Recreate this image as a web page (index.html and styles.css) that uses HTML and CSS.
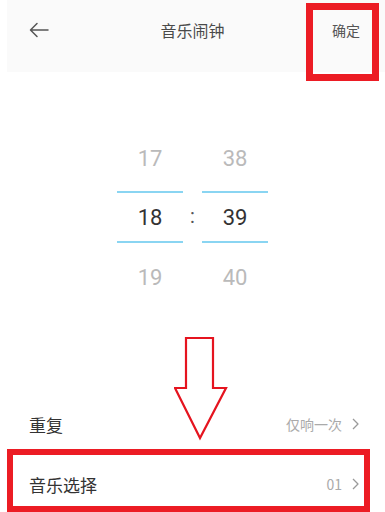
FILE: index.html
```html
<!DOCTYPE html>
<html lang="zh">
<head>
<meta charset="utf-8">
<link rel="stylesheet" href="styles.css">
</head>
<body>
<div class="page">
  <header class="header">
    <svg class="back" width="20" height="16" viewBox="0 0 20 16">
      <path d="M19 8 H2 M8 1.5 L1.5 8 L8 14.5" fill="none" stroke="#555" stroke-width="1.5" stroke-linecap="round" stroke-linejoin="round"/>
    </svg>
    <div class="title">音乐闹钟</div>
    <div class="confirm">确定</div>
  </header>

  <section class="picker">
    <div class="col">
      <div class="cell dim top">17</div>
      <div class="cell sel">18</div>
      <div class="cell dim bottom">19</div>
    </div>
    <div class="colon">:</div>
    <div class="col">
      <div class="cell dim top">38</div>
      <div class="cell sel">39</div>
      <div class="cell dim bottom">40</div>
    </div>
  </section>

  <section class="list">
    <div class="row">
      <span class="label">重复</span>
      <span class="value">仅响一次
        <svg class="chev" width="7" height="12" viewBox="0 0 7 12"><path d="M1 1 L6 6 L1 11" fill="none" stroke="#9a9a9a" stroke-width="1.3" stroke-linejoin="round"/></svg>
      </span>
    </div>
    <div class="row">
      <span class="label">音乐选择</span>
      <span class="value">01
        <svg class="chev" width="7" height="12" viewBox="0 0 7 12"><path d="M1 1 L6 6 L1 11" fill="none" stroke="#9a9a9a" stroke-width="1.3" stroke-linejoin="round"/></svg>
      </span>
    </div>
  </section>

  <div class="mark mark-top"></div>
  <div class="mark mark-bottom"></div>
  <svg class="down-arrow" width="56" height="104" viewBox="0 0 56 104">
    <path d="M12 1 H39 V51 H52 L26 101 L1 51 H12 Z" fill="#fff" stroke="#e5141f" stroke-width="2.2" stroke-linejoin="miter"/>
  </svg>
</div>
</body>
</html>
```

FILE: styles.css
```css
* { box-sizing: border-box; }
html, body { margin: 0; padding: 0; background: #fff; }
body {
  width: 385px;
  height: 512px;
  overflow: hidden;
  font-family: Roboto, "Noto Sans CJK SC", sans-serif;
}
.page {
  position: relative;
  width: 385px;
  height: 512px;
}
.header {
  margin-left: 7px;
  height: 72px;
  background: #fafafa;
  display: flex;
  align-items: flex-start;
  padding: 0 0 0 22px;
  position: relative;
}
.back {
  margin-top: 22px;
}
.title {
  position: absolute;
  left: 0;
  right: 7px;
  top: 19px;
  text-align: center;
  font-size: 16px;
  line-height: 22px;
  color: #4a4a4a;
  font-family: "Noto Sans CJK SC", sans-serif;
}
.confirm {
  margin-left: auto;
  margin-right: 25px;
  margin-top: 20px;
  font-size: 14px;
  line-height: 20px;
  color: #555;
  font-family: "Noto Sans CJK SC", sans-serif;
}
.picker {
  margin-top: 55px;
  display: flex;
  justify-content: center;
}
.col {
  width: 66px;
  display: flex;
  flex-direction: column;
}
.cell {
  text-align: center;
  font-size: 22px;
  font-family: Roboto, sans-serif;
}
.dim { color: #bababa; }
.top { height: 64px; line-height: 64px; }
.sel {
  height: 52px;
  line-height: 50px;
  color: #333;
  border-top: 2px solid #8ad5f2;
  border-bottom: 2px solid #8ad5f2;
}
.bottom { height: 64px; line-height: 70px; }
.colon {
  width: 19px;
  text-align: center;
  font-size: 20px;
  color: #555;
  margin-top: 64px;
  line-height: 50px;
}
.list {
  margin-top: 87px;
}
.row {
  height: 60px;
  display: flex;
  align-items: center;
  justify-content: space-between;
  padding: 0 26px 0 29px;
  font-family: "Noto Sans CJK SC", sans-serif;
}
.label {
  font-size: 17px;
  color: #333;
}
.value {
  display: flex;
  align-items: center;
  gap: 10px;
  font-size: 14px;
  color: #aaa;
}
.chev { display: block; }
.mark {
  position: absolute;
  border: 7px solid #ec1c24;
}
.mark-top {
  left: 306px;
  top: 3px;
  width: 73px;
  height: 78px;
}
.mark-bottom {
  left: 7px;
  top: 449px;
  width: 363px;
  height: 63px;
  border-width: 6px;
}
.down-arrow {
  position: absolute;
  left: 174px;
  top: 337px;
}
```
